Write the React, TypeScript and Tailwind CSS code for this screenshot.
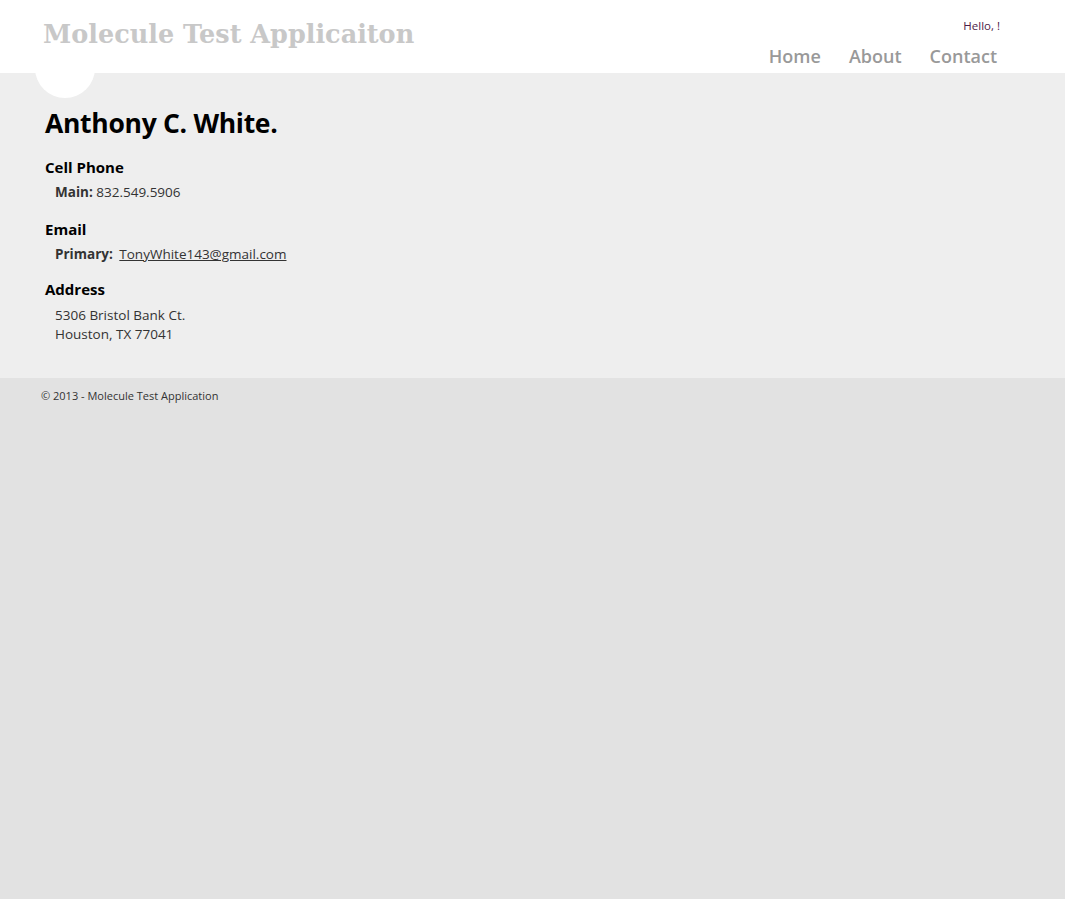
import React from "react";

export default function App() {
  return (
    <div className="min-h-[899px] bg-[#e2e2e2] font-['Open_Sans',sans-serif] text-[#333]">
      <header className="relative z-10 h-[73px] bg-white flex justify-between">
        <div className="pl-[43px] pt-[16px]">
          <p className="font-['DejaVu_Serif',serif] font-bold text-[25.5px] leading-[36px] text-[#c8c8c8]">
            Molecule Test Applicaiton
          </p>
        </div>
        <div className="flex flex-col items-end pr-[68px]">
          <div className="pt-[18px] mr-[-3px] text-[11.5px] leading-[16px] text-[#4e1d48]">Hello, !</div>
          <nav className="flex gap-[28px] mt-[10px] text-[18px] leading-[24px] font-semibold text-[#999]">
            <span>Home</span>
            <span>About</span>
            <span>Contact</span>
          </nav>
        </div>
      </header>
      <main className="relative h-[305px] bg-[#eeeeee]">
        <div className="absolute left-[35px] top-[-35px] w-[60px] h-[60px] rounded-full bg-white" />
        <div className="relative pl-[45px] pt-[29px]">
          <h1 className="text-[26.5px] leading-[42px] font-bold text-black tracking-[-0.3px]">Anthony C. White.</h1>
          <h3 className="mt-[13px] text-[15px] leading-[20px] font-bold text-black">Cell Phone</h3>
          <div className="pl-[10px] mt-[6px] text-[13.5px] leading-[19px]">
            <span className="font-bold">Main:</span> 832.549.5906
          </div>
          <h3 className="mt-[17px] text-[15px] leading-[20px] font-bold text-black">Email</h3>
          <div className="pl-[10px] mt-[6px] text-[13.5px] leading-[19px]">
            <span className="font-bold">Primary:</span>{" "}
            <a className="underline pl-[3px]">TonyWhite143@gmail.com</a>
          </div>
          <h3 className="mt-[15px] text-[15px] leading-[20px] font-bold text-black">Address</h3>
          <div className="pl-[10px] mt-[7px] text-[13.5px] leading-[19px]">
            <div>5306 Bristol Bank Ct.</div>
            <div>Houston, TX 77041</div>
          </div>
        </div>
      </main>
      <footer className="pl-[41px] pt-[10px] text-[11px] leading-[16px] text-[#333]">
        © 2013 - Molecule Test Application
      </footer>
    </div>
  );
}
